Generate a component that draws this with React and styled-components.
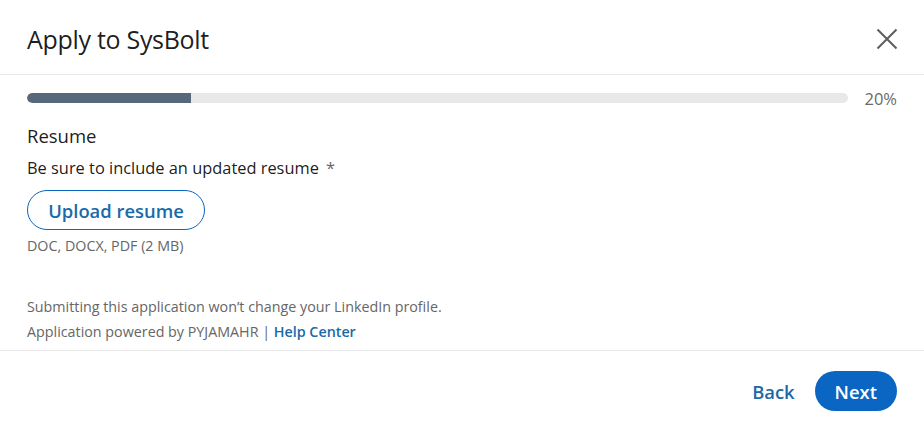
import React from "react";
import styled, { createGlobalStyle } from "styled-components";

const Global = createGlobalStyle`
  html, body { margin: 0; padding: 0; background: #fff; }
  body { font-family: "Open Sans", "Noto Sans", sans-serif; color: rgba(0,0,0,0.9); }
  * { box-sizing: border-box; }
`;

const Modal = styled.div`
  width: 924px;
  height: 431px;
  display: flex;
  flex-direction: column;
  background: #fff;
`;

const Header = styled.header`
  height: 75px;
  display: flex;
  align-items: center;
  justify-content: space-between;
  padding: 4px 26px 0 27px;
  border-bottom: 1px solid #e8e8e8;
`;

const Title = styled.h2`
  margin: 0;
  font-size: 25px;
  font-weight: 400;
  letter-spacing: -0.3px;
  line-height: 32px;
  color: rgba(0,0,0,0.9);
`;

const CloseBtn = styled.button`
  border: 0;
  background: none;
  padding: 0;
  width: 22px;
  height: 22px;
  display: flex;
  align-items: center;
  justify-content: center;
  color: #5e5e5e;
  cursor: pointer;
`;

const Body = styled.div`
  flex: 1;
  padding: 14px 27px 0 27px;
  display: flex;
  flex-direction: column;
  border-bottom: 1px solid #e8e8e8;
`;

const ProgressRow = styled.div`
  display: flex;
  align-items: center;
  gap: 16px;
  height: 18px;
`;

const Track = styled.div`
  flex: 1;
  height: 10px;
  border-radius: 5px;
  background: #e8e8e8;
  overflow: hidden;
`;

const Fill = styled.div`
  height: 100%;
  background: #56687a;
  border-radius: 5px 0 0 5px;
`;

const Percent = styled.span`
  font-size: 16.5px;
  color: #6a6a6a;
  width: 33px;
  text-align: right;
  white-space: nowrap;
`;

const SectionTitle = styled.h3`
  margin: 16px 0 0 0;
  font-size: 18.5px;
  font-weight: 500;
  line-height: 26px;
  color: rgba(0,0,0,0.9);
`;

const Label = styled.p`
  margin: 7px 0 0 0;
  font-size: 16.4px;
  line-height: 23px;
  color: rgba(0,0,0,0.9);
`;

const Star = styled.span`
  color: #666;
  margin-left: 7px;
`;

const UploadBtn = styled.button`
  align-self: flex-start;
  margin-top: 11px;
  height: 40px;
  width: 178px;
  padding: 0;
  border: 1px solid #0a66c2;
  border-radius: 20px;
  background: #fff;
  color: #1a6aa7;
  font-family: inherit;
  font-size: 18.4px;
  font-weight: 600;
  cursor: pointer;
`;

const Hint = styled.p`
  margin: 6px 0 0 0;
  font-size: 14.3px;
  line-height: 20px;
  color: #666;
`;

const Notes = styled.div`
  margin-top: 41px;
  display: flex;
  flex-direction: column;
  gap: 5px;
  font-size: 14.3px;
  line-height: 20px;
  color: #666;
`;

const Link = styled.a`
  color: #1a6aa7;
  font-weight: 600;
  text-decoration: none;
`;

const Footer = styled.footer`
  height: 80px;
  display: flex;
  align-items: center;
  justify-content: flex-end;
  gap: 20px;
  padding: 0 27px;
`;

const FooterBtn = styled.button`
  height: 40px;
  padding: 0 ${p => (p.$primary ? "20px" : "0")};
  border: 0;
  border-radius: 20px;
  background: ${p => (p.$primary ? "#0a66c2" : "transparent")};
  color: ${p => (p.$primary ? "#fff" : "#1a6aa7")};
  font-family: inherit;
  font-size: 18.4px;
  font-weight: 600;
  cursor: pointer;
`;

export default function App() {
  return (
    <>
      <Global />
      <Modal>
        <Header>
          <Title>Apply to SysBolt</Title>
          <CloseBtn aria-label="Dismiss">
            <svg width="22" height="22" viewBox="0 0 22 22" fill="none" stroke="currentColor" strokeWidth="2">
              <path d="M1.5 1.5 L20.5 20.5 M20.5 1.5 L1.5 20.5" />
            </svg>
          </CloseBtn>
        </Header>
        <Body>
          <ProgressRow>
            <Track>
              <Fill style={{ width: "20%" }} />
            </Track>
            <Percent>20%</Percent>
          </ProgressRow>
          <SectionTitle>Resume</SectionTitle>
          <Label>
            Be sure to include an updated resume<Star>*</Star>
          </Label>
          <UploadBtn>Upload resume</UploadBtn>
          <Hint>DOC, DOCX, PDF (2 MB)</Hint>
          <Notes>
            <span>Submitting this application won’t change your LinkedIn profile.</span>
            <span>
              Application powered by PYJAMAHR | <Link href="#">Help Center</Link>
            </span>
          </Notes>
        </Body>
        <Footer>
          <FooterBtn>Back</FooterBtn>
          <FooterBtn $primary>Next</FooterBtn>
        </Footer>
      </Modal>
    </>
  );
}
